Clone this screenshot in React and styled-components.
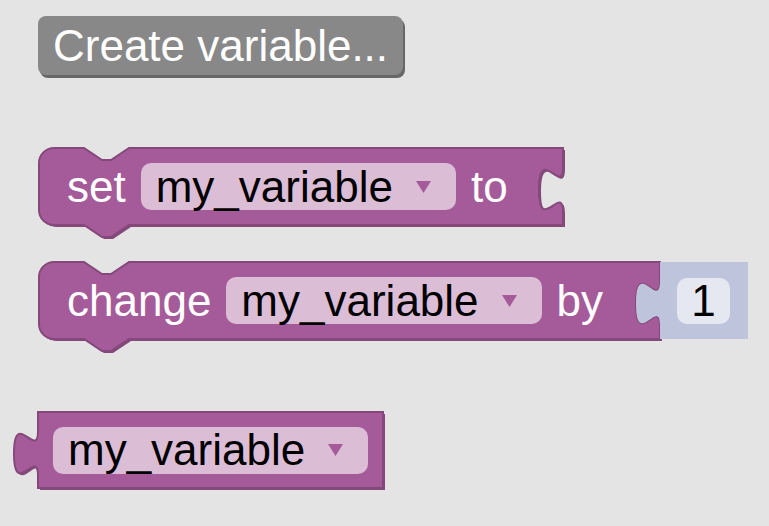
import React from 'react';
import styled, { createGlobalStyle } from 'styled-components';

const FONT = `"Liberation Sans", Arial, sans-serif`;
const VAR = '#a55b99';
const VAR_DARK = '#84497a';
const MATH = '#bec4dc';

const GlobalStyle = createGlobalStyle`
  html, body {
    margin: 0;
    background: #e4e4e4;
  }
  body {
    font-family: ${FONT};
  }
`;

const Flyout = styled.div`
  display: flex;
  flex-direction: column;
  align-items: flex-start;
  box-sizing: border-box;
  min-height: 100vh;
  padding: 16px 0 0 38px;
`;

const FlyoutButton = styled.button`
  display: flex;
  align-items: center;
  height: 59px;
  padding: 0 15px;
  border: 0;
  border-radius: 8px;
  background: #888;
  box-shadow: 2px 3px 0 #676767;
  color: #fff;
  font-family: ${FONT};
  font-size: 44px;
  cursor: pointer;
`;

const Block = styled.div`
  position: relative;
  z-index: 0;
  box-sizing: border-box;
  display: flex;
  align-items: center;
  gap: 15px;
  width: ${(p) => p.$w}px;
  height: ${(p) => p.$h}px;
  padding-left: ${(p) => p.$pad}px;
  margin-top: ${(p) => p.$top || 0}px;
  margin-left: ${(p) => p.$left || 0}px;
  font-size: 44px;
`;

const Shape = styled.svg`
  position: absolute;
  left: 0;
  top: 0;
  overflow: visible;
  z-index: 0;
`;

const Label = styled.span`
  position: relative;
  z-index: 1;
  color: #fff;
`;

const Field = styled.div`
  position: relative;
  z-index: 1;
  box-sizing: border-box;
  display: flex;
  align-items: center;
  gap: 23px;
  height: 47px;
  padding: 0 25px 0 15px;
  border-radius: 10px;
  background: ${(p) => p.$bg};
  color: #000;
`;

const NumberField = styled(Field)`
  justify-content: center;
  width: 53px;
  height: 46px;
  padding: 0;
`;

const Row = styled.div`
  display: flex;
  margin-top: ${(p) => p.$top}px;
  margin-left: ${(p) => p.$left}px;
`;

// blockly-ish outlines, scale 3
const TAB_DOWN = 'V 19 c 0,30 -24,-24 -24,22.5 s 24,-7.5 24,22.5';
const TAB_UP = 'V 64 c 0,-30 -24,24 -24,-22.5 s 24,7.5 24,-22.5';

const statementPath = (w, h, input) => {
  const r = 15;
  return [
    `M 0,${r} A ${r},${r} 0 0 1 ${r},0 H 45 l 18,12 h 9 l 18,-12 H ${w}`,
    input ? TAB_DOWN : '',
    `V ${h} H 90 l -18,12 h -9 l -18,-12 H ${r} A ${r},${r} 0 0 1 0,${h - r} Z`,
  ].join(' ');
};

const outputPath = (w, h) => `M 0,0 H ${w} V ${h} H 0 ${TAB_UP} Z`;

function BlockOutline({ w, h, d, fill, stroke }) {
  return (
    <Shape width={w} height={h}>
      {stroke && <path d={d} fill={stroke} transform="translate(2,2)" />}
      <path d={d} fill={fill} stroke={stroke || 'none'} strokeWidth="2" />
    </Shape>
  );
}

function Arrow() {
  return (
    <svg width="15" height="12" viewBox="0 0 15 12">
      <path d="M0,0 H15 L7.5,12 Z" fill={VAR} />
    </svg>
  );
}

function VariableField() {
  return (
    <Field $bg="#dbbdd6">
      <span>my_variable</span>
      <Arrow />
    </Field>
  );
}

export default function App() {
  return (
    <>
      <GlobalStyle />
      <Flyout>
        <FlyoutButton>Create variable...</FlyoutButton>

        <Block $w={524} $h={77} $pad={28} $top={73} $left={1}>
          <BlockOutline w={524} h={77} d={statementPath(524, 77, true)} fill={VAR} stroke={VAR_DARK} />
          <Label>set</Label>
          <VariableField />
          <Label>to</Label>
        </Block>

        <Row $top={37} $left={1}>
          <Block $w={621} $h={77} $pad={28}>
            <BlockOutline w={621} h={77} d={statementPath(621, 77, true)} fill={VAR} stroke={VAR_DARK} />
            <Label>change</Label>
            <VariableField />
            <Label>by</Label>
          </Block>
          <Block $w={88} $h={77} $pad={17}>
            <BlockOutline w={88} h={77} d={outputPath(88, 77)} fill={MATH} />
            <NumberField $bg="#e5e7f1">1</NumberField>
          </Block>
        </Row>

        <Block $w={345} $h={76} $pad={15} $top={73}>
          <BlockOutline w={345} h={76} d={outputPath(345, 76)} fill={VAR} stroke={VAR_DARK} />
          <VariableField />
        </Block>
      </Flyout>
    </>
  );
}
